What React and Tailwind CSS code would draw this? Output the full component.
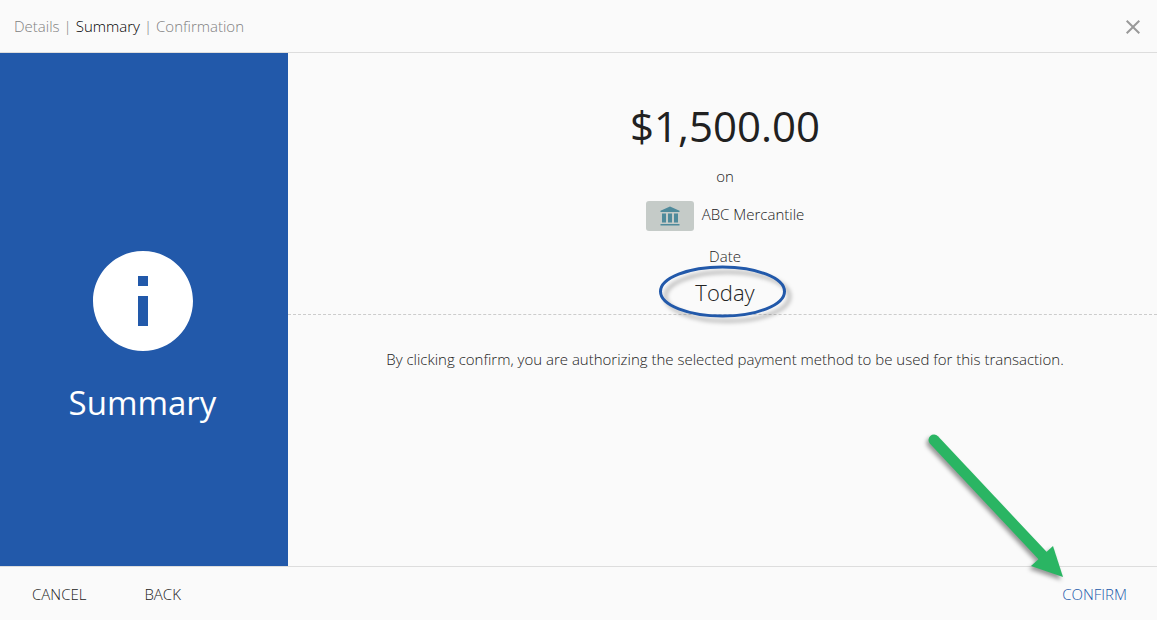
function CloseIcon() {
  return (
    <svg viewBox="0 0 24 24" className="size-6 fill-[#999]" aria-hidden="true">
      <path d="M19 6.41L17.59 5 12 10.59 6.41 5 5 6.41 10.59 12 5 17.59 6.41 19 12 13.41 17.59 19 19 17.59 13.41 12z" />
    </svg>
  );
}

function InfoIcon() {
  return (
    <svg viewBox="0 0 24 24" className="size-[120px] fill-white" aria-hidden="true">
      <path d="M12 2C6.48 2 2 6.48 2 12s4.48 10 10 10 10-4.48 10-10S17.52 2 12 2zm1 15h-2v-6h2v6zm0-8h-2V7h2v2z" />
    </svg>
  );
}

function BankIcon() {
  return (
    <svg viewBox="0 0 20 20" className="size-5 fill-[#4f8a9b]" aria-hidden="true">
      <path d="M10 0.500L19.500 4.800V6H0.500V4.800zM2 7.500H6V16.500H2zM8 7.500H12V16.500H8zM14 7.500H18V16.500H14zM0.500 18H19.500V19.500H0.500z" />
    </svg>
  );
}

function Ring() {
  return (
    <svg
      viewBox="0 0 140 64"
      className="pointer-events-none absolute left-1/2 top-1/2 -ml-[75px] -mt-[31px] h-16 w-[140px] drop-shadow-[5px_5px_2px_rgba(0,0,0,0.3)]"
      aria-hidden="true"
    >
      <ellipse cx="72.500" cy="30.500" rx="62" ry="24.500" fill="none" stroke="#2259aa" strokeWidth="3" />
    </svg>
  );
}

function Arrow() {
  return (
    <svg
      viewBox="0 0 150 150"
      className="pointer-events-none absolute bottom-full right-full mb-[2px] -mr-[7px] size-[150px] drop-shadow-[-2px_3px_2px_rgba(0,0,0,0.4)]"
      aria-hidden="true"
    >
      <path d="M15 8L124 124" stroke="#2ab563" strokeWidth="11" strokeLinecap="round" />
      <path d="M134 114L144 145L112 134z" fill="#2ab563" />
    </svg>
  );
}

export default function App() {
  return (
    <div className="flex min-h-screen flex-col bg-[#fafafa] font-['Open_Sans',sans-serif] text-[15px] leading-5 font-light text-[#222]">
      <header className="flex items-center justify-between border-b border-[#ddd] pt-[15px] pb-[13px] pl-[14px] pr-3">
        <nav aria-label="Progress" className="flex gap-1 pb-[2px] text-[#808080]">
          <a href="#details">Details</a>
          <span>|</span>
          <a href="#summary" aria-current="step" className="text-black">Summary</a>
          <span>|</span>
          <a href="#confirmation">Confirmation</a>
        </nav>
        <button type="button" aria-label="Close">
          <CloseIcon />
        </button>
      </header>

      <div className="flex flex-1">
        <aside className="flex w-72 shrink-0 flex-col items-center justify-center gap-4 bg-[#2259aa] pt-[51px] pr-[3px] text-white">
          <InfoIcon />
          <h1 className="text-[33px] leading-[52px] font-normal">Summary</h1>
        </aside>

        <main className="flex-1 text-center">
          <section className="flex flex-col items-center border-b border-dashed border-[#ccc] pt-[45px] pb-[6px] pl-[5px]">
            <p className="text-[42px] leading-[56px] font-normal text-[#212121]">$1,500.00</p>
            <p className="mt-3">on</p>
            <div className="mt-[15px] flex items-center gap-2">
              <span className="flex h-[30px] w-12 items-center justify-center rounded-[3px] bg-[#c5cbc8]">
                <BankIcon />
              </span>
              <span className="pb-1">ABC Mercantile</span>
            </div>
            <p className="mt-[15px]">Date</p>
            <p className="relative mt-[10px] text-[22px] leading-8">
              Today
              <Ring />
            </p>
          </section>
          <p className="pt-[34px] pl-[5px]">
            By clicking confirm, you are authorizing the selected payment method to be used for this transaction.
          </p>
        </main>
      </div>

      <footer className="flex items-center border-t border-[#ddd] pt-[17px] pb-4 pl-8 pr-[30px]">
        <div className="flex flex-1 gap-[58px]">
          <button type="button">CANCEL</button>
          <button type="button">BACK</button>
        </div>
        <div className="relative">
          <button type="button" className="text-[#2259aa]">CONFIRM</button>
          <Arrow />
        </div>
      </footer>
    </div>
  );
}
